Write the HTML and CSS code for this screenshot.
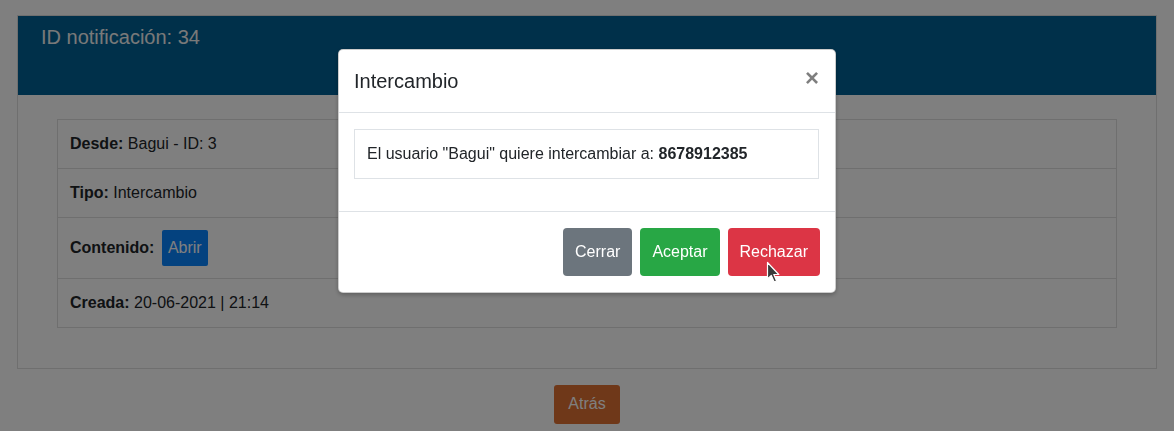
FILE: index.html
```html
<!DOCTYPE html>
<html lang="es">
<head>
<meta charset="utf-8">
<title>Notificación 34</title>
<link rel="stylesheet" href="styles.css">
</head>
<body>
<div class="page">
  <div class="card">
    <div class="card-header">ID notificación: 34</div>
    <div class="card-body">
      <ul class="list">
        <li class="list-item"><b>Desde:</b> Bagui - ID: 3</li>
        <li class="list-item"><b>Tipo:</b> Intercambio</li>
        <li class="list-item"><b>Contenido:</b> <button class="btn btn-blue">Abrir</button></li>
        <li class="list-item"><b>Creada:</b> 20-06-2021 | 21:14</li>
      </ul>
    </div>
  </div>
  <div class="back-row">
    <button class="btn btn-back">Atrás</button>
  </div>
</div>

<div class="backdrop"></div>

<div class="modal-wrap">
  <div class="modal">
    <div class="modal-header">
      <h5 class="modal-title">Intercambio</h5>
      <button class="close" aria-label="Cerrar">×</button>
    </div>
    <div class="modal-body">
      <div class="msg-box">El usuario "Bagui" quiere intercambiar a: <b>8678912385</b></div>
    </div>
    <div class="modal-footer">
      <button class="btn btn-lgx btn-gray">Cerrar</button>
      <button class="btn btn-lgx btn-green">Aceptar</button>
      <button class="btn btn-lgx btn-red">Rechazar</button>
    </div>
  </div>
</div>

<svg class="cursor" width="14" height="23" viewBox="0 0 14 23" aria-hidden="true">
  <path d="M1.5 1.5 L1.5 18 L5.3 14.4 L8.2 21 L10.6 20 L7.8 13.5 L12.8 13.5 Z" fill="#3a3a3a" stroke="#ffffff" stroke-width="1.2" stroke-linejoin="round"/>
</svg>
</body>
</html>
```

FILE: styles.css
```css
* { box-sizing: border-box; }

html, body {
  margin: 0;
  padding: 0;
  background: #ffffff;
}

body {
  font-family: "Liberation Sans", Arial, Helvetica, sans-serif;
  font-size: 16px;
  line-height: 24px;
  color: #212529;
  overflow: hidden;
}

.page {
  padding: 15px 17px 0;
}

.card {
  border: 1px solid rgba(0, 0, 0, 0.125);
  background: #fff;
}

.card-header {
  height: 79px;
  background: #006094;
  color: #f2f2f2;
  font-size: 20px;
  line-height: 24px;
  padding: 9px 23px;
}

.card-body {
  padding: 24px 39px 40px;
}

.list {
  list-style: none;
  margin: 0;
  padding: 0;
  border: 1px solid rgba(0, 0, 0, 0.125);
}

.list-item {
  padding: 12px;
  line-height: 24px;
}

.list-item + .list-item {
  border-top: 1px solid rgba(0, 0, 0, 0.125);
}

.list-item b { font-weight: 700; }

.btn {
  font-family: inherit;
  font-size: 16px;
  line-height: 24px;
  border: 0;
  border-radius: 4px;
  color: #fff;
  cursor: pointer;
}

.btn-blue {
  background: #0884ff;
  padding: 6px 6px;
  margin-left: 3px;
  vertical-align: baseline;
  border-radius: 2px;
}

.back-row {
  display: flex;
  justify-content: center;
  margin-top: 16px;
}

.btn-back {
  background: #de7032;
  padding: 7px 14px 8px;
  border-radius: 3px;
}

.backdrop {
  position: fixed;
  inset: 0;
  background: rgba(0, 0, 0, 0.5);
}

.modal-wrap {
  position: fixed;
  inset: 0;
  display: flex;
  justify-content: center;
  align-items: flex-start;
  padding-top: 49px;
}

.modal {
  width: 498px;
  background: #fff;
  border: 1px solid rgba(0, 0, 0, 0.2);
  border-radius: 5px;
  box-shadow: 0 2px 4px rgba(0, 0, 0, 0.25);
}

.modal-header {
  display: flex;
  align-items: flex-start;
  padding: 16px 16px 16px 15px;
  border-bottom: 1px solid #dee2e6;
}

.modal-title {
  margin: 0;
  font-size: 20px;
  line-height: 30px;
  font-weight: 400;
  color: #212529;
}

.close {
  margin: -16px -16px -16px auto;
  padding: 16px;
  background: transparent;
  border: 0;
  font-family: inherit;
  font-size: 24px;
  font-weight: 700;
  line-height: 24px;
  color: #000;
  opacity: 0.5;
}

.modal-body {
  padding: 16px 16px 16px 15px;
}

.msg-box {
  border: 1px solid #dee2e6;
  padding: 12px;
  margin-bottom: 16px;
  color: #212529;
}

.msg-box b { font-weight: 700; }

.modal-footer {
  display: flex;
  justify-content: flex-end;
  align-items: center;
  padding: 12px 11px 12px 12px;
  border-top: 1px solid #dee2e6;
}

.btn-lgx {
  padding: 12px;
  margin: 4px;
}

.btn-gray { background: #6c757d; }
.btn-green { background: #28a745; }
.btn-red { background: #dc3545; }

.cursor {
  position: fixed;
  left: 766px;
  top: 261px;
}
```
